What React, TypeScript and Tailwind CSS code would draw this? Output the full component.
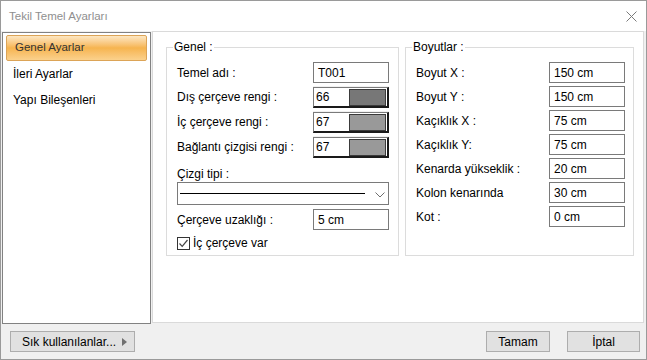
import { ReactNode } from 'react';

function TextBox({ value }: { value: string }) {
  return (
    <div className="w-[76px] h-[21px] border border-[#7a7a7a] bg-white pl-[4px] flex items-center">
      {value}
    </div>
  );
}

function Row({ label, children }: { label: string; children: ReactNode }) {
  return (
    <div className="flex items-center justify-between">
      <span>{label}</span>
      {children}
    </div>
  );
}

function ColorBox({ value, color }: { value: string; color: string }) {
  return (
    <div className="w-[76px] h-[22px] bg-[#f0f0f0] pt-[1px]">
      <div className="h-[21px] bg-white border-l border-t border-[#7a7a7a] border-r-2 border-b-2 border-r-[#1a1a1a] border-b-[#1a1a1a] flex items-center">
        <span className="pl-[2px]">{value}</span>
        <div className="ml-auto mr-[1px] w-[37px] h-[17px] border border-[#3a3a3a]" style={{ backgroundColor: color }} />
      </div>
    </div>
  );
}

function GroupBox({ title, className, children }: { title: string; className: string; children: ReactNode }) {
  return (
    <fieldset className={`border border-[#dcdcdc] ${className}`}>
      <legend className="ml-[6px] px-[1px] leading-[14px]">{title}</legend>
      {children}
    </fieldset>
  );
}

export default function App() {
  return (
    <div className="w-[647px] h-[360px] flex flex-col bg-[#f0f0f0] border border-[#9a9a9a] font-['Liberation_Sans',Arial,sans-serif] text-[12px] text-black overflow-hidden">
      {/* Title bar */}
      <div className="h-[30px] bg-white flex items-center justify-between pl-[8px] pr-[9px]">
        <span className="text-[11.5px] text-[#8f8f8f] pt-[1px]">Tekil Temel Ayarları</span>
        <svg width="11" height="11" viewBox="0 0 11 11" className="mt-[1px]">
          <path d="M0.5 0.5 L10.5 10.5 M10.5 0.5 L0.5 10.5" stroke="#7a7a7a" strokeWidth="1" />
        </svg>
      </div>

      {/* Main area */}
      <div className="flex items-start">
        {/* Left list */}
        <div className="ml-[1px] mt-[1px] w-[149px] h-[292px] bg-white border border-[#828282] pt-[2px]">
          <div className="mx-[3px] h-[26px] rounded-[2px] border border-[#dca457] bg-gradient-to-b from-[#fde7c2] via-[#f6b44e] to-[#fbd18c] pl-[8px] flex items-center text-[#333] text-[11.5px]">
            Genel Ayarlar
          </div>
          <div className="mx-[3px] h-[26px] pl-[7px] flex items-center">İleri Ayarlar</div>
          <div className="mx-[3px] h-[26px] pl-[7px] flex items-center">Yapı Bileşenleri</div>
        </div>

        {/* Right panel */}
        <div className="ml-[1px] w-[492px] h-[292px] bg-white border border-[#dadada] pl-[13px] pt-[8px] flex gap-[6px]">
          <GroupBox title="Genel :" className="w-[233px] h-[216px]">
            <div className="pl-[10px] pr-[9px]">
              <div className="flex flex-col gap-[3px] pt-[8px]">
                <Row label="Temel adı :">
                  <TextBox value="T001" />
                </Row>
                <Row label="Dış çerçeve rengi :">
                  <ColorBox value="66" color="#777777" />
                </Row>
                <Row label="İç çerçeve rengi :">
                  <ColorBox value="67" color="#999999" />
                </Row>
                <Row label="Bağlantı çizgisi rengi :">
                  <ColorBox value="67" color="#999999" />
                </Row>
              </div>
              <div className="mt-[9px] leading-[14px]">Çizgi tipi :</div>
              <div className="mt-[1px] h-[23px] border border-[#7a7a7a] bg-white flex items-center pl-[2px] pr-[2px]">
                <div className="w-[185px] h-[1px] bg-black" />
                <svg width="10" height="6" viewBox="0 0 10 6" className="ml-auto mr-[1px] mt-[2px]">
                  <path d="M0.5 0.5 L5 5 L9.5 0.5" stroke="#6e6e6e" strokeWidth="1" fill="none" />
                </svg>
              </div>
              <div className="mt-[4px]">
                <Row label="Çerçeve uzaklığı :">
                  <TextBox value="5 cm" />
                </Row>
              </div>
              <div className="mt-[4px] flex items-center gap-[3px]">
                <div className="w-[13px] h-[13px] border border-[#333] bg-white flex items-center justify-center">
                  <svg width="11" height="11" viewBox="0 0 11 11">
                    <path d="M1.5 5.5 L4.2 8.3 L9.5 2" stroke="#444" strokeWidth="1.2" fill="none" />
                  </svg>
                </div>
                <span>İç çerçeve var</span>
              </div>
            </div>
          </GroupBox>

          <GroupBox title="Boyutlar :" className="w-[229px] h-[216px]">
            <div className="flex flex-col gap-[3px] pt-[8px] pl-[10px] pr-[8px]">
              <Row label="Boyut X :"><TextBox value="150 cm" /></Row>
              <Row label="Boyut Y :"><TextBox value="150 cm" /></Row>
              <Row label="Kaçıklık X :"><TextBox value="75 cm" /></Row>
              <Row label="Kaçıklık Y:"><TextBox value="75 cm" /></Row>
              <Row label="Kenarda yükseklik :"><TextBox value="20 cm" /></Row>
              <Row label="Kolon kenarında"><TextBox value="30 cm" /></Row>
              <Row label="Kot :"><TextBox value="0 cm" /></Row>
            </div>
          </GroupBox>
        </div>
      </div>

      {/* Bottom buttons */}
      <div className="flex-1 flex items-center pl-[9px] pr-[6px]">
        <button className="w-[125px] h-[21px] bg-[#e1e1e1] border border-[#adadad] flex items-center pl-[11px] pr-[7px]">
          <span>Sık kullanılanlar...</span>
          <svg width="5" height="8" viewBox="0 0 5 8" className="ml-auto">
            <path d="M0 0 L5 4 L0 8 Z" fill="#707070" />
          </svg>
        </button>
        <button className="ml-auto w-[64px] h-[21px] bg-[#e1e1e1] border border-[#adadad]">Tamam</button>
        <button className="ml-[17px] w-[73px] h-[21px] bg-[#e1e1e1] border border-[#adadad]">İptal</button>
      </div>
    </div>
  );
}
